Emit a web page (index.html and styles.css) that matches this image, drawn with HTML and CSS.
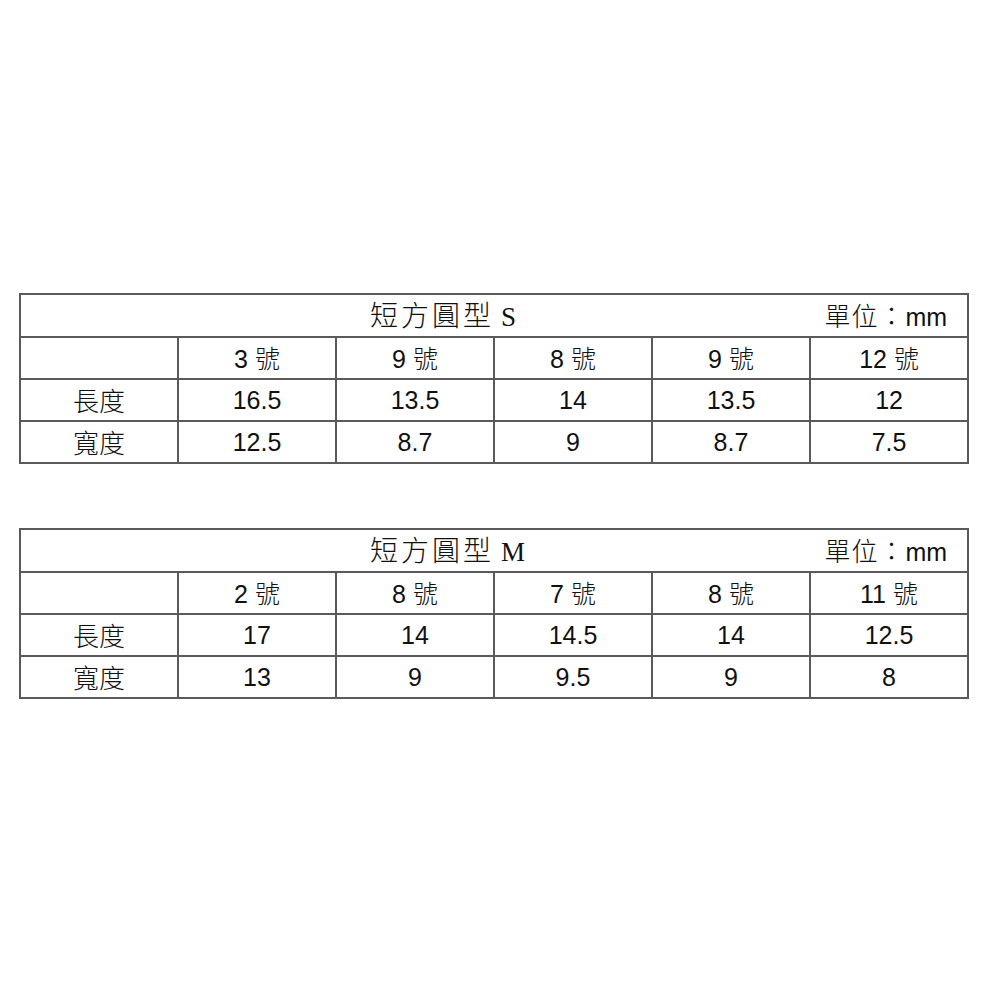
FILE: index.html
```html
<!DOCTYPE html>
<html lang="zh-Hant">
<head>
<meta charset="utf-8">
<title>短方圓型 尺寸表</title>
<link rel="stylesheet" href="styles.css">
</head>
<body>
<main class="page">
  <table class="size-table">
    <colgroup><col><col><col><col><col><col></colgroup>
    <tr class="title-row">
      <td colspan="6">
        <div class="title-bar">
          <span class="title"><span class="cjk">短方圓型</span><span class="latin">S</span></span>
          <span class="unit"><span class="cjk">單位：</span>mm</span>
        </div>
      </td>
    </tr>
    <tr>
      <td></td>
      <td>3 <span class="cjk">號</span></td>
      <td>9 <span class="cjk">號</span></td>
      <td>8 <span class="cjk">號</span></td>
      <td>9 <span class="cjk">號</span></td>
      <td>12 <span class="cjk">號</span></td>
    </tr>
    <tr>
      <td class="cjk label">長度</td>
      <td>16.5</td><td>13.5</td><td>14</td><td>13.5</td><td>12</td>
    </tr>
    <tr>
      <td class="cjk label">寬度</td>
      <td>12.5</td><td>8.7</td><td>9</td><td>8.7</td><td>7.5</td>
    </tr>
  </table>

  <table class="size-table">
    <colgroup><col><col><col><col><col><col></colgroup>
    <tr class="title-row">
      <td colspan="6">
        <div class="title-bar">
          <span class="title"><span class="cjk">短方圓型</span><span class="latin">M</span></span>
          <span class="unit"><span class="cjk">單位：</span>mm</span>
        </div>
      </td>
    </tr>
    <tr>
      <td></td>
      <td>2 <span class="cjk">號</span></td>
      <td>8 <span class="cjk">號</span></td>
      <td>7 <span class="cjk">號</span></td>
      <td>8 <span class="cjk">號</span></td>
      <td>11 <span class="cjk">號</span></td>
    </tr>
    <tr>
      <td class="cjk label">長度</td>
      <td>17</td><td>14</td><td>14.5</td><td>14</td><td>12.5</td>
    </tr>
    <tr>
      <td class="cjk label">寬度</td>
      <td>13</td><td>9</td><td>9.5</td><td>9</td><td>8</td>
    </tr>
  </table>
</main>
</body>
</html>
```

FILE: styles.css
```css
html, body {
  margin: 0;
  padding: 0;
  background: #ffffff;
}

.page {
  padding: 293px 32px 0 19px;
  display: flex;
  flex-direction: column;
  gap: 64px;
}

.size-table {
  width: 948px;
  border-collapse: collapse;
  table-layout: fixed;
  font-family: "Liberation Sans", "Noto Sans CJK TC", sans-serif;
  font-size: 25px;
  color: #111;
}

.size-table col {
  width: 158px;
}

.size-table td {
  border: 2px solid #5a5a5a;
  height: 40px;
  padding: 0;
  text-align: center;
  vertical-align: middle;
  line-height: 1;
}

.cjk {
  font-family: "Noto Sans CJK TC", "Noto Sans CJK SC", sans-serif;
  font-weight: 300;
}

.label {
  font-size: 26px;
}

.title-row td {
  height: 41px;
}

.title-bar {
  display: flex;
  justify-content: space-between;
  align-items: center;
  padding: 0 20px 0 349px;
}

.title {
  display: flex;
  align-items: baseline;
}

.title .cjk {
  font-size: 28px;
  letter-spacing: 3px;
}

.title .latin {
  font-family: "Liberation Serif", serif;
  font-size: 27px;
  margin-left: 7px;
}

.unit {
  font-size: 25px;
}

.unit .cjk {
  font-size: 26px;
  letter-spacing: 1px;
}
```
